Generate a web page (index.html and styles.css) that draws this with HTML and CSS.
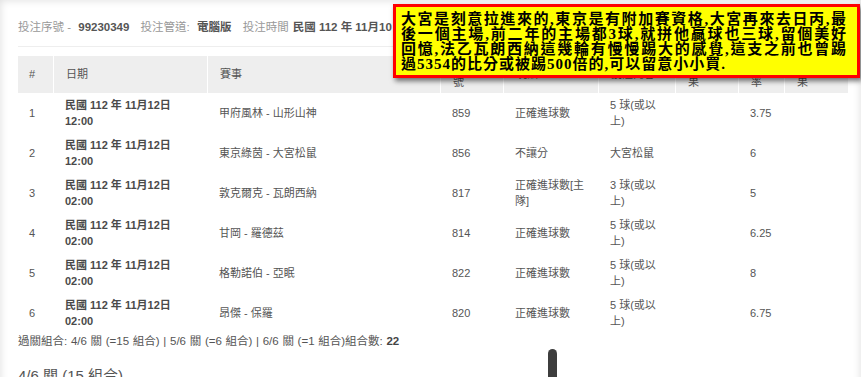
FILE: index.html
```html
<!DOCTYPE html>
<html lang="zh-Hant">
<head>
<meta charset="utf-8">
<title>投注明細</title>
<link rel="stylesheet" href="styles.css">
</head>
<body>
<div class="page">
  <div class="content">
    <div class="info">
      <span class="item"><span class="lbl">投注序號 - </span><b>99230349</b></span>
      <span class="item"><span class="lbl">投注管道: </span><b>電腦版</b></span>
      <span class="item"><span class="lbl">投注時間</span><b>民國 112 年 11月10日 18:25</b></span>
    </div>
    <table class="bets">
      <colgroup>
        <col class="c1"><col class="c2"><col class="c3"><col class="c4"><col class="c5"><col class="c6"><col class="c7"><col class="c8"><col class="c9">
      </colgroup>
      <thead>
        <tr><th>#</th><th>日期</th><th>賽事</th><th>賽事編<br>號</th><th>玩法</th><th>投注內容</th><th>賽事結<br>果</th><th>賠<br>率</th><th>結<br>果</th></tr>
      </thead>
      <tbody>
        <tr><td>1</td><td><b>民國 112 年 11月12日<br>12:00</b></td><td>甲府風林 - 山形山神</td><td>859</td><td>正確進球數</td><td>5 球(或以上)</td><td></td><td>3.75</td><td></td></tr>
        <tr><td>2</td><td><b>民國 112 年 11月12日<br>12:00</b></td><td>東京綠茵 - 大宮松鼠</td><td>856</td><td>不讓分</td><td>大宮松鼠</td><td></td><td>6</td><td></td></tr>
        <tr><td>3</td><td><b>民國 112 年 11月12日<br>02:00</b></td><td>敦克爾克 - 瓦朗西納</td><td>817</td><td>正確進球數[主隊]</td><td>3 球(或以上)</td><td></td><td>5</td><td></td></tr>
        <tr><td>4</td><td><b>民國 112 年 11月12日<br>02:00</b></td><td>甘岡 - 羅德茲</td><td>814</td><td>正確進球數</td><td>5 球(或以上)</td><td></td><td>6.25</td><td></td></tr>
        <tr><td>5</td><td><b>民國 112 年 11月12日<br>02:00</b></td><td>格勒諾伯 - 亞眠</td><td>822</td><td>正確進球數</td><td>5 球(或以上)</td><td></td><td>8</td><td></td></tr>
        <tr><td>6</td><td><b>民國 112 年 11月12日<br>02:00</b></td><td>昂傑 - 保羅</td><td>820</td><td>正確進球數</td><td>5 球(或以上)</td><td></td><td>6.75</td><td></td></tr>
      </tbody>
    </table>
    <p class="summary">過關組合: 4/6 關 (=15 組合) | 5/6 關 (=6 組合) | 6/6 關 (=1 組合)組合數: <b>22</b></p>
    <h4 class="sub">4/6 關 (15 組合)</h4>
  </div>
  <div class="note">
    <div class="ln">大宮是刻意拉進來的,東京是有附加賽資格,大宮再來去日丙,最</div>
    <div class="ln">後一個主場,前二年的主場都3球,就拼他贏球也三球,留個美好</div>
    <div class="ln">回憶,法乙瓦朗西納這幾輪有慢慢踢大的感覺,這支之前也曾踢</div>
    <div class="ln last">過5354的比分或被踢500倍的,可以留意小小買.</div>
  </div>
  <div class="handle"></div>
</div>
</body>
</html>
```
FILE: styles.css
```css
* { box-sizing: border-box; }
html, body { margin: 0; padding: 0; overflow: hidden; background: #fff; }
body {
  font-family: "Liberation Sans", "Noto Sans CJK TC", sans-serif;
  color: #555;
}
.page {
  position: relative;
  height: 420px;
  box-shadow: inset 0 0 8px rgba(0, 0, 0, 0.14);
}
.content { padding: 19px 13px 0 18px; }

.info {
  font-size: 11.5px;
  line-height: 16px;
  padding-bottom: 11px;
  border-bottom: 1px solid #eee;
  white-space: nowrap;
  overflow: hidden;
  color: #999;
}
.info b { color: #555; }
.lbl { margin-right: 4px; }
.item { margin-right: 8px; }

.bets {
  margin-top: 9px;
  width: 830px;
  table-layout: fixed;
  border-collapse: separate;
  border-spacing: 0;
  font-size: 11px;
  line-height: 16px;
}
.c1 { width: 35px; }
.c2 { width: 154px; }
.c3 { width: 233px; }
.c4 { width: 63px; }
.c5 { width: 95px; }
.c6 { width: 77px; }
.c7 { width: 63px; }
.c8 { width: 46px; }
.c9 { width: 64px; }
.bets th {
  background: #eee;
  font-weight: normal;
  text-align: left;
  padding: 3px 12px;
  vertical-align: middle;
  border-left: 1px solid #fff;
  line-height: 15.7px;
}
.bets th:first-child { border-left: 0; padding-left: 11px; }
.bets td {
  padding: 4px 12px;
  vertical-align: middle;
}
.bets td:first-child { padding-left: 11px; }
.bets b { color: #4a4a4a; }

.summary {
  margin: 0;
  font-size: 11.5px;
  line-height: 17px;
  word-spacing: 0.5px;
}
.summary b { color: #444; }
.sub {
  margin: 18px 0 0;
  font-size: 15px;
  line-height: 16.5px;
  font-weight: normal;
  color: #555;
}

.note {
  position: absolute;
  top: 4px;
  left: 393px;
  right: 1px;
  background: #ff0;
  border: 3px solid #f00;
  padding: 5px 10px 3px 5px;
  font: bold 15px/15px "Liberation Serif", "Noto Sans CJK TC", serif;
  letter-spacing: 1px;
  color: #000;
  box-shadow: 2px 3px 5px rgba(0, 0, 0, 0.55);
}
.ln { text-align: justify; text-align-last: justify; white-space: nowrap; }
.ln.last { text-align-last: left; }

.handle {
  position: absolute;
  left: 548px;
  top: 349px;
  width: 9px;
  height: 40px;
  border-radius: 5px;
  background: #3d3d3d;
}
```
